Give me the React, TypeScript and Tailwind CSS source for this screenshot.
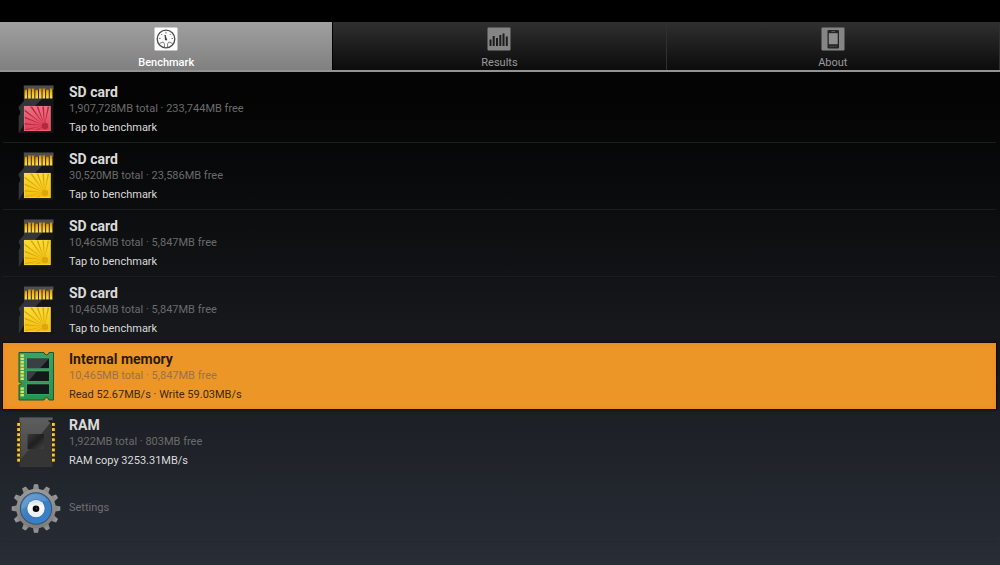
import { useState } from 'react'
import type { ReactNode } from 'react'

type Row = {
  title: string
  info: string
  status: string
  icon: ReactNode
}

function SdCardIcon({ id, light, dark, ray }: { id: string; light: string; dark: string; ray: string }) {
  return (
    <svg viewBox="0 0 50 50" className="h-[50px] w-[50px] shrink-0" aria-hidden="true">
      <defs>
        <linearGradient id={`${id}-label`} x1="0" y1="0" x2="0" y2="1">
          <stop offset="0" stopColor={light} />
          <stop offset="1" stopColor={dark} />
        </linearGradient>
        <linearGradient id={`${id}-gold`} x1="0" y1="0" x2="0" y2="1">
          <stop offset="0" stopColor="#c98c10" />
          <stop offset="0.4" stopColor="#f2b91c" />
          <stop offset="1" stopColor="#ffdc55" />
        </linearGradient>
        <clipPath id={`${id}-clip`}>
          <rect x="13" y="22" width="26.5" height="25" />
        </clipPath>
      </defs>
      <path d="M12 1.5H42.5V49H7.5V32L9 30V27L7.5 25V22.5L12.5 17Z" fill="#151516" />
      <path d="M13 17L7.8 23V25L9.2 27V30L7.8 32V49L13 40V22H24L32 14H13Z" fill="#343536" />
      <path d="M13 1.5H42.5V5.5H13Z" fill="#4e4e4e" />
      {[13.5, 17.1, 20.7, 24.3, 27.9, 31.5, 35.1, 38.7].map((x, i) => (
        <rect key={x} x={x} y={i % 3 === 0 ? 5.5 : 4.5} width="2.7" height={i % 3 === 0 ? 9 : 10} fill={`url(#${id}-gold)`} />
      ))}
      <rect x="13" y="22" width="26.5" height="25" fill={`url(#${id}-label)`} />
      <g clipPath={`url(#${id}-clip)`} fill={ray}>
        <path d="M33.5 41.5L10 46V47.3ZM33.5 41.5L10 38.5V40.3ZM33.5 41.5L10 31V33ZM33.5 41.5L10 22.5V25ZM33.5 41.5L17 20H19.5ZM33.5 41.5L24.5 20H26.5ZM33.5 41.5L31 20H33ZM33.5 41.5L37 20H39ZM33.5 41.5L20 49H23Z" />
        <circle cx="34" cy="42" r="3.2" />
      </g>
      <rect x="13.3" y="22.3" width="25.9" height="24.4" fill="none" stroke={light} strokeWidth="0.7" />
    </svg>
  )
}

function MemoryIcon() {
  return (
    <svg viewBox="0 0 50 50" className="h-[50px] w-[50px] shrink-0" aria-hidden="true">
      <defs>
        <linearGradient id="board" x1="0" y1="0" x2="0" y2="1">
          <stop offset="0" stopColor="#3fa062" />
          <stop offset="1" stopColor="#249551" />
        </linearGradient>
      </defs>
      <path
        d="M8 1.5H33Q33.5 3.8 35.5 3.8T38 1.5H42.5V49H38Q37.5 46.5 35.5 46.5T33 49H8V34Q10.3 33.8 10.3 32.5T8 31Z"
        fill="url(#board)"
        stroke="#1d5631"
        strokeWidth="1"
      />
      {[3.5, 6.8, 10.1, 13.4, 16.7, 20, 23.3, 26.6, 36.4, 39.7, 43].map((y) => (
        <rect key={y} x="9.5" y={y} width="3.4" height="2.4" fill="#d8e45c" />
      ))}
      {[7.5, 20.3, 33.3].map((y) => (
        <g key={y}>
          <rect x="15" y={y - 1} width="23.5" height="11.5" fill="#58b078" opacity="0.45" />
          <rect x="16" y={y} width="22" height="9.7" fill="#15181a" />
        </g>
      ))}
      <path d="M16 7.5H38L29 17.2H16ZM16 20.3H26L17.5 30H16Z" fill="#50555a" opacity="0.65" />
    </svg>
  )
}

function ChipIcon() {
  return (
    <svg viewBox="0 0 50 50" className="h-[50px] w-[50px] shrink-0" aria-hidden="true">
      <defs>
        <linearGradient id="chip" x1="0" y1="0" x2="0" y2="1">
          <stop offset="0" stopColor="#5e5e5e" />
          <stop offset="1" stopColor="#444" />
        </linearGradient>
        <linearGradient id="die" x1="0" y1="0" x2="1" y2="1">
          <stop offset="0" stopColor="#3a3a3a" />
          <stop offset="0.5" stopColor="#1f1f20" />
          <stop offset="1" stopColor="#434343" />
        </linearGradient>
      </defs>
      <rect x="8.5" y="0.5" width="33" height="49.5" rx="0.5" fill="#353535" />
      <path d="M8.5 0.5H41.5V3L8.5 44Z" fill="url(#chip)" />
      <path d="M36.5 3.5L41 7V3Z" fill="#1d1d1e" />
      <rect x="16.5" y="17" width="16.5" height="15" fill="url(#die)" />
      {[6, 11.1, 16.2, 21.3, 26.4, 31.5, 36.6, 41.7].map((y) => (
        <g key={y}>
          <rect x="5.5" y={y - 0.5} width="4" height="4" fill="#3a2905" />
          <rect x="40.5" y={y - 0.5} width="4" height="4" fill="#3a2905" />
          <rect x="6.2" y={y} width="2.8" height="2.9" fill="#f5c83e" />
          <rect x="41" y={y} width="2.8" height="2.9" fill="#f5c83e" />
        </g>
      ))}
    </svg>
  )
}

function GearIcon() {
  return (
    <svg viewBox="0 0 50 50" className="h-[50px] w-[50px] shrink-0" aria-hidden="true">
      <defs>
        <linearGradient id="gear" x1="0" y1="0" x2="0" y2="1">
          <stop offset="0" stopColor="#9a9a9a" />
          <stop offset="1" stopColor="#7c7c7c" />
        </linearGradient>
        <linearGradient id="iris" x1="0" y1="0" x2="1" y2="1">
          <stop offset="0" stopColor="#5d93cb" />
          <stop offset="0.5" stopColor="#3a7cc0" />
          <stop offset="1" stopColor="#3684cc" />
        </linearGradient>
        <linearGradient id="eye" x1="0" y1="0" x2="0" y2="1">
          <stop offset="0" stopColor="#d3dde8" />
          <stop offset="0.4" stopColor="#f8f9fb" />
          <stop offset="1" stopColor="#e8edf3" />
        </linearGradient>
      </defs>
      <g fill="url(#gear)">
        {[0, 30, 60, 90, 120, 150, 180, 210, 240, 270, 300, 330].map((deg) => (
          <path key={deg} d="M21.5 8L23 1.2H27L28.5 8Z" transform={`rotate(${deg} 25 25.5)`} />
        ))}
        <circle cx="25" cy="25.5" r="19.8" />
      </g>
      <circle cx="25" cy="25.5" r="16.2" fill="#38506a" />
      <circle cx="25" cy="25.5" r="15.2" fill="url(#iris)" />
      <path d="M10.5 26.5A14.5 14.5 0 0 1 37 17.5Q22 18.5 10.5 26.5Z" fill="#8cb9e2" opacity="0.35" />
      <circle cx="25" cy="25.5" r="9.3" fill="#2d68a6" />
      <circle cx="25" cy="25.5" r="8.7" fill="url(#eye)" />
      <circle cx="25" cy="25.7" r="3.3" fill="#050608" />
      <circle cx="25.5" cy="25.5" r="0.7" fill="#4e555c" />
    </svg>
  )
}

function GaugeIcon() {
  return (
    <svg viewBox="0 0 24 24" className="h-6 w-6" aria-hidden="true">
      <rect x="0.5" y="0.5" width="23" height="23" rx="1" fill="#fcfcfc" />
      <circle cx="12" cy="12" r="8.8" fill="none" stroke="#4b4b4b" strokeWidth="1.3" />
      <g stroke="#6a6a6a" strokeWidth="0.9" fill="none">
        <path d="M12 4.8V6.5M7.2 7L8.2 8M16.8 7L15.8 8M5 11.5H6.5M17.5 11.5H19" />
        <path d="M5.5 16.5L9 15Q10.8 15.5 10.5 20.5M18.5 16.5L15 15Q13.2 15.5 13.5 20.5" />
      </g>
      <path d="M11 8L12.8 13H11.5Z" fill="#333" stroke="#333" strokeWidth="0.8" />
    </svg>
  )
}

function BarsIcon() {
  return (
    <svg viewBox="0 0 24 24" className="h-6 w-6" aria-hidden="true">
      <rect x="0.5" y="0.5" width="23" height="23" rx="1" fill="#858585" />
      <path
        d="M2.5 12.5H4.5V19H2.5ZM5.7 9H7.7V19H5.7ZM9 11H11V19H9ZM12.3 8H14.3V19H12.3ZM15.5 6.5H17.5V19H15.500ZM18.800 9.500H20.800V19H18.800Z"
        fill="#1d1d1d"
      />
    </svg>
  )
}

function PhoneIcon() {
  return (
    <svg viewBox="0 0 24 24" className="h-6 w-6" aria-hidden="true">
      <rect x="0.5" y="0.5" width="23" height="23" rx="1" fill="#858585" />
      <rect x="6.5" y="3" width="11.5" height="18.5" rx="1" fill="#262626" />
      <rect x="7.8" y="6.2" width="8.9" height="11" fill="#8f8f8f" />
      <path d="M10.5 4.5H14M9 19.3H10.5M11.5 19.3H13M14 19.3H15.5" stroke="#666" strokeWidth="0.8" />
    </svg>
  )
}

const tabs = [
  { label: 'Benchmark', icon: <GaugeIcon /> },
  { label: 'Results', icon: <BarsIcon /> },
  { label: 'About', icon: <PhoneIcon /> },
]

const yellow = { light: '#f8de3a', dark: '#f3bd0c', ray: '#dba60e' }

const rows: Row[] = [
  {
    title: 'SD card',
    info: '1,907,728MB total · 233,744MB free',
    status: 'Tap to benchmark',
    icon: <SdCardIcon id="sd1" light="#ee7286" dark="#e23e56" ray="#b02a3e" />,
  },
  {
    title: 'SD card',
    info: '30,520MB total · 23,586MB free',
    status: 'Tap to benchmark',
    icon: <SdCardIcon id="sd2" {...yellow} />,
  },
  {
    title: 'SD card',
    info: '10,465MB total · 5,847MB free',
    status: 'Tap to benchmark',
    icon: <SdCardIcon id="sd3" {...yellow} />,
  },
  {
    title: 'SD card',
    info: '10,465MB total · 5,847MB free',
    status: 'Tap to benchmark',
    icon: <SdCardIcon id="sd4" {...yellow} />,
  },
  {
    title: 'Internal memory',
    info: '10,465MB total · 5,847MB free',
    status: 'Read 52.67MB/s · Write 59.03MB/s',
    icon: <MemoryIcon />,
  },
  {
    title: 'RAM',
    info: '1,922MB total · 803MB free',
    status: 'RAM copy 3253.31MB/s',
    icon: <ChipIcon />,
  },
]

function StorageRow({ row, selected, divider, onSelect }: { row: Row; selected: boolean; divider: boolean; onSelect: () => void }) {
  return (
    <li className={divider ? 'border-b border-[#1b1c1e]' : ''}>
      <button
        type="button"
        onClick={onSelect}
        className={`flex min-h-[66px] w-full items-center gap-2 px-2 text-left ${
          selected ? 'bg-[#ed9628] shadow-[inset_0_0_5px_#ed8420,0_0_2px_1px_#100c08]' : ''
        }`}
      >
        {row.icon}
        <span className="pt-1">
          <span className={`block text-sm leading-[18px] font-bold ${selected ? 'text-[#2b1a08]' : 'text-[#dadada]'}`}>
            {row.title}
          </span>
          <span className={`block text-[11px] leading-4 ${selected ? 'text-[#967348]' : 'text-[#6b6b6c]'}`}>{row.info}</span>
          <span className={`block text-[11px] leading-[22px] ${selected ? 'text-[#3d260b]' : 'text-[#dadada]'}`}>
            {row.status}
          </span>
        </span>
      </button>
    </li>
  )
}

export default function App() {
  const [tab, setTab] = useState(0)
  const [selected, setSelected] = useState(4)

  return (
    <div className="flex min-h-screen flex-col bg-black pt-[22px] font-[Roboto,sans-serif]">
      <nav className="grid grid-cols-3 border-b-2 border-[#939393] bg-linear-to-b from-[#303030] to-[#0c0c0c]">
        {tabs.map((t, i) => (
          <button
            key={t.label}
            type="button"
            onClick={() => setTab(i)}
            className={`flex flex-col items-center gap-[5px] border-r pt-[5px] text-[11px] leading-[14px] ${
              tab === i
                ? 'border-black bg-linear-to-b from-[#a0a0a0] to-[#808080] font-medium text-white'
                : 'border-[#303030] text-[#9a9a9a]'
            }`}
          >
            {t.icon}
            {t.label}
          </button>
        ))}
      </nav>

      <main className="flex-1 bg-linear-to-b from-[#030303] via-[#15171a] to-[#282d36] pt-1 pr-1 pl-[3px]">
        <ul>
          {rows.map((row, i) => (
            <StorageRow key={i} row={row} selected={selected === i} divider={i < 3} onSelect={() => setSelected(i)} />
          ))}
          <li className="border-b border-[#22272f]">
            <button type="button" className="flex min-h-[66px] w-full items-center gap-2 px-2 text-left text-[11px] text-[#6d6f73]">
              <GearIcon />
              Settings
            </button>
          </li>
        </ul>
      </main>
    </div>
  )
}
